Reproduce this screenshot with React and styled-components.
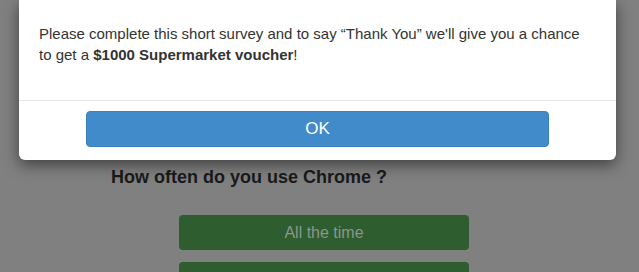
import React from "react";
import styled, { createGlobalStyle } from "styled-components";

const GlobalStyle = createGlobalStyle`
  html, body {
    margin: 0;
    padding: 0;
    background: #808080;
  }
  body {
    font-family: "Liberation Sans", Arial, sans-serif;
  }
`;

const Page = styled.div`
  position: relative;
  width: 639px;
  height: 272px;
  overflow: hidden;
  background: #808080;
`;

const Survey = styled.div`
  padding-top: 166px;
`;

const Question = styled.h3`
  margin: 0 0 0 111px;
  font-size: 18px;
  line-height: 22px;
  font-weight: 700;
  color: #1a1a1a;
`;

const Answers = styled.div`
  display: flex;
  flex-direction: column;
  gap: 12px;
  margin: 27px 0 0 179px;
  width: 290px;
`;

const Answer = styled.button`
  height: 35px;
  border: none;
  border-radius: 4px;
  background: #2e5d2f;
  color: #8a978a;
  font-family: inherit;
  font-size: 16px;
  padding: 0;
`;

const Modal = styled.div`
  position: absolute;
  top: 0;
  left: 19px;
  width: 597px;
  background: #fff;
  border-radius: 0 0 6px 6px;
  box-shadow: 0 5px 15px rgba(0, 0, 0, 0.5);
`;

const Body = styled.div`
  padding: 23px 20px 35px;
  border-bottom: 1px solid #e5e5e5;
`;

const Text = styled.p`
  margin: 0;
  font-size: 15px;
  line-height: 21px;
  color: #333;
`;

const Footer = styled.div`
  display: flex;
  justify-content: center;
  padding: 10px 0 13px;
`;

const OkButton = styled.button`
  width: 463px;
  height: 36px;
  border: 1px solid #3a80bd;
  border-radius: 4px;
  background: #428bca;
  color: #fff;
  font-family: inherit;
  font-size: 17px;
  padding: 0;
`;

export default function App() {
  return (
    <>
      <GlobalStyle />
      <Page>
        <Survey>
          <Question>How often do you use Chrome ?</Question>
          <Answers>
            <Answer>All the time</Answer>
            <Answer>Sometimes</Answer>
          </Answers>
        </Survey>
        <Modal>
          <Body>
            <Text>
              Please complete this short survey and to say “Thank You” we'll
              give you a chance to get a <b>$1000 Supermarket voucher</b>!
            </Text>
          </Body>
          <Footer>
            <OkButton>OK</OkButton>
          </Footer>
        </Modal>
      </Page>
    </>
  );
}
